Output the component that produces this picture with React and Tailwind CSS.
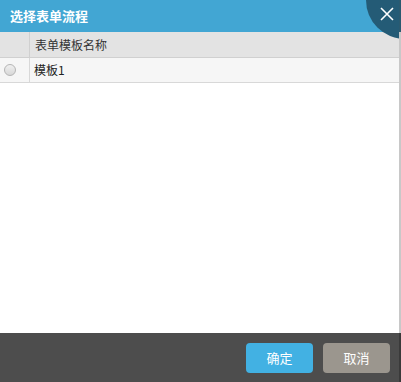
export default function App() {
  const font = { fontFamily: '"Microsoft YaHei","Noto Sans CJK SC","Liberation Sans",sans-serif' };
  return (
    <div className="w-[401px] h-[382px] flex bg-white" style={font}>
      <div className="relative w-[399px] h-full flex flex-col overflow-hidden">
        <div className="h-[32px] bg-[#42a6d3] flex items-center pl-[10px] shrink-0">
          <span className="text-white text-[13px] font-bold">选择表单流程</span>
        </div>
        <div className="absolute right-[-45px] top-[-39px] w-[78px] h-[78px] rounded-full bg-[#245b76]" />
        <svg className="absolute right-[5px] top-[7px]" width="14" height="14" viewBox="0 0 14 14">
          <path d="M1 1L13 13M13 1L1 13" stroke="white" strokeWidth="1.6" />
        </svg>
        <div className="flex-1 flex flex-col">
          <div className="flex h-[26px] bg-[#e3e3e3] border-b border-[#d0d0d0]">
            <div className="w-[30px] border-r border-[#d0d0d0]" />
            <div className="flex items-center pl-[5px] text-[12px] text-[#333]">表单模板名称</div>
          </div>
          <div className="flex h-[25px] bg-[#f6f6f6] border-b border-[#d8d8d8]">
            <div className="w-[30px] border-r border-[#d8d8d8] flex items-center justify-center">
              <div className="w-[12px] h-[12px] rounded-full border border-[#b5b5b5] bg-gradient-to-b from-[#f0f0f0] to-[#d8d8d8] mr-[10px]" />
            </div>
            <div className="flex items-center pl-[4px] text-[12px] text-[#222]">模板1</div>
          </div>
        </div>
        <div className="h-[49px] bg-[#4d4d4d] flex items-center justify-end gap-[10px] pr-[9px] shrink-0">
          <button className="w-[67px] h-[30px] rounded-[4px] bg-[#42b1e3] text-white text-[13px]">确定</button>
          <button className="w-[67px] h-[30px] rounded-[4px] bg-[#9b968e] text-white text-[13px]">取消</button>
        </div>
      </div>
      <div className="w-[2px] h-full flex flex-col">
        <div className="h-[32px] bg-[#2a5a70]" />
        <div className="flex-1 bg-[#c8c8c8]" />
        <div className="h-[49px] bg-[#3a3a3a]" />
      </div>
    </div>
  );
}
